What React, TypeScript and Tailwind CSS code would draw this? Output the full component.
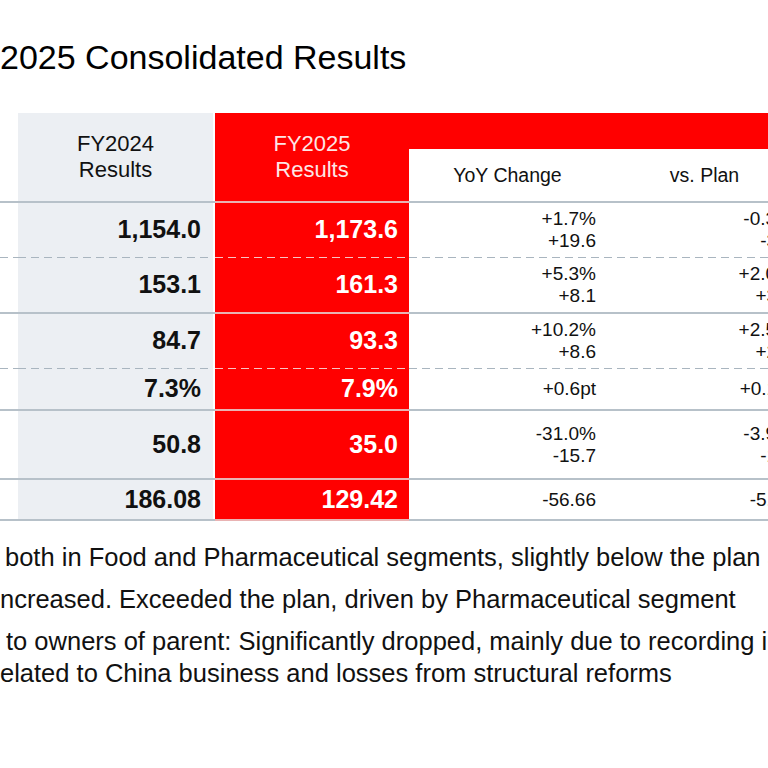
import React from "react";

type Row = {
  h: string;
  prev: string;
  cur: string;
  yoy: string[];
  plan: string[];
  sep: "dashed" | "solid";
};

const rows: Row[] = [
  { h: "h-[54px]", prev: "1,154.0", cur: "1,173.6", yoy: ["+1.7%", "+19.6"], plan: ["-0.3%", "-3.4"], sep: "dashed" },
  { h: "h-[54px]", prev: "153.1", cur: "161.3", yoy: ["+5.3%", "+8.1"], plan: ["+2.0%", "+3.1"], sep: "solid" },
  { h: "h-[54px]", prev: "84.7", cur: "93.3", yoy: ["+10.2%", "+8.6"], plan: ["+2.5%", "+2.3"], sep: "dashed" },
  { h: "h-[40px]", prev: "7.3%", cur: "7.9%", yoy: ["+0.6pt"], plan: ["+0.1pt"], sep: "solid" },
  { h: "h-[67px]", prev: "50.8", cur: "35.0", yoy: ["-31.0%", "-15.7"], plan: ["-3.9%", "-1.4"], sep: "solid" },
  { h: "h-[39px]", prev: "186.08", cur: "129.42", yoy: ["-56.66"], plan: ["-5.58"], sep: "solid" },
];

function Separator({ kind }: { kind: "dashed" | "solid" }) {
  if (kind === "dashed") {
    return (
      <div className="flex h-px">
        <div className="w-[18px] bg-white bg-[repeating-linear-gradient(to_right,#a9b5bf_0_8px,transparent_8px_13px)]" />
        <div className="w-[195px] bg-[#eceff3] bg-[repeating-linear-gradient(to_right,#a9b5bf_0_8px,transparent_8px_13px)]" />
        <div className="w-[2px] bg-white" />
        <div className="w-[194px] bg-[#ff0000] bg-[repeating-linear-gradient(to_right,#f8c4c4_0_8px,transparent_8px_13px)]" />
        <div className="w-[394px] bg-white bg-[repeating-linear-gradient(to_right,#a9b5bf_0_8px,transparent_8px_13px)]" />
      </div>
    );
  }
  return (
    <div className="flex h-[2px]">
      <div className="w-[215px] bg-[#b7c1c9]" />
      <div className="w-[194px] bg-[#e9b3b3]" />
      <div className="w-[394px] bg-[#b7c1c9]" />
    </div>
  );
}

function Change({ lines }: { lines: string[] }) {
  return (
    <div className="flex w-[197px] flex-col items-end justify-center pr-[10px] text-[19px] leading-[22px] text-[#111]">
      {lines.map((l) => (
        <span key={l}>{l}</span>
      ))}
    </div>
  );
}

export default function App() {
  return (
    <div className="h-[768px] w-[768px] overflow-hidden bg-white font-['Liberation_Sans',Arial,sans-serif] text-black">
      <h1 className="whitespace-nowrap pt-[40px] text-[34px] font-normal leading-none">2025 Consolidated Results</h1>

      {/* Results table */}
      <div className="mt-[39px] w-max">
        <div className="flex h-[88px]">
          <div className="w-[18px]" />
          <div className="flex w-[195px] flex-col items-center justify-center bg-[#eceff3] text-[22px] leading-[26px] text-[#111]">
            <span>FY2024</span>
            <span>Results</span>
          </div>
          <div className="w-[2px] bg-white" />
          <div className="flex w-[194px] flex-col items-center justify-center bg-[#ff0000] text-[22px] leading-[26px] text-[#fde6e6]">
            <span>FY2025</span>
            <span>Results</span>
          </div>
          <div className="flex w-[394px] flex-col">
            <div className="h-[36px] bg-[#ff0000]" />
            <div className="flex flex-1 items-center bg-white pt-[2px] text-[19.5px] text-[#111]">
              <div className="w-[197px] text-center">YoY Change</div>
              <div className="w-[197px] text-center">vs. Plan</div>
            </div>
          </div>
        </div>
        <Separator kind="solid" />

        {rows.map((r) => (
          <div key={r.prev}>
            <div className={`flex ${r.h}`}>
              <div className="w-[18px]" />
              <div className="flex w-[195px] items-center justify-end bg-[#eceff3] pr-[12px] text-[25px] font-bold text-[#111]">
                {r.prev}
              </div>
              <div className="w-[2px] bg-white" />
              <div className="flex w-[194px] items-center justify-end bg-[#ff0000] pr-[11px] text-[25px] font-bold text-white">
                {r.cur}
              </div>
              <Change lines={r.yoy} />
              <Change lines={r.plan} />
            </div>
            <Separator kind={r.sep} />
          </div>
        ))}
      </div>

      {/* Notes */}
      <div className="mt-[20px] whitespace-nowrap text-[25.5px] leading-[32px] text-[#111]">
        <p className="pl-[5px]">both in Food and Pharmaceutical segments, slightly below the plan as</p>
        <p className="mt-[10px]">ncreased. Exceeded the plan, driven by Pharmaceutical segment</p>
        <div className="mt-[10px]">
          <p className="pl-[6px]"> to owners of parent: Significantly dropped, mainly due to recording impairment</p>
          <p>elated to China business and losses from structural reforms</p>
        </div>
      </div>
    </div>
  );
}
